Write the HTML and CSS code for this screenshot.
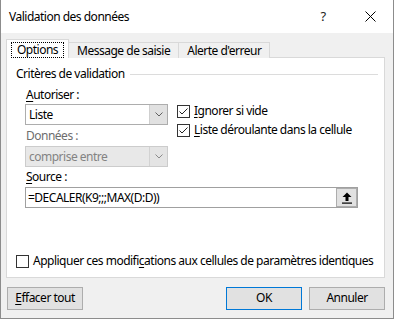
FILE: index.html
```html
<!DOCTYPE html>
<html lang="fr">
<head>
<meta charset="utf-8">
<title>Validation des données</title>
<link rel="stylesheet" href="styles.css">
</head>
<body>
<div class="window">
  <div class="titlebar">
    <span class="title">Validation des données</span>
    <span class="tb-help">?</span>
    <span class="tb-close"><svg width="11" height="11" viewBox="0 0 11 11"><path d="M0.5 0.5 L10.5 10.5 M10.5 0.5 L0.5 10.5" stroke="#000" stroke-width="1" fill="none"/></svg></span>
  </div>
  <div class="client">
    <div class="tabs">
      <div class="tab active"><span class="focus">Options</span></div>
      <div class="tab">Message de saisie</div>
      <div class="tab">Alerte d'erreur</div>
    </div>
    <div class="panel">
      <div class="group-title"><span>Critères de validation</span><span class="rule"></span></div>
      <div class="group-body">
        <div class="col-left">
          <div class="label"><u>A</u>utoriser :</div>
          <div class="select">
            <span class="value">Liste</span>
            <span class="drop"><svg width="8" height="5" viewBox="0 0 8 5"><path d="M0.5 0.5 L4 4 L7.5 0.5" stroke="#606060" fill="none"/></svg></span>
          </div>
          <div class="label disabled gap3">Données :</div>
          <div class="select disabled">
            <span class="value">comprise entre</span>
            <span class="drop"><svg width="8" height="5" viewBox="0 0 8 5"><path d="M0.5 0.5 L4 4 L7.5 0.5" stroke="#8a8a8a" fill="none"/></svg></span>
          </div>
        </div>
        <div class="col-right">
          <div class="check">
            <span class="box"><svg width="11" height="11" viewBox="0 0 11 11"><path d="M1.5 5.5 L4 8 L9.5 2.5" stroke="#222" stroke-width="1" fill="none"/></svg></span>
            <span><u>I</u>gnorer si vide</span>
          </div>
          <div class="check second">
            <span class="box"><svg width="11" height="11" viewBox="0 0 11 11"><path d="M1.5 5.5 L4 8 L9.5 2.5" stroke="#222" stroke-width="1" fill="none"/></svg></span>
            <span><u>L</u>iste déroulante dans la cellule</span>
          </div>
        </div>
      </div>
      <div class="source-block">
        <div class="label"><u>S</u>ource :</div>
        <div class="source">
          <span class="value">=DECALER(K9;;;MAX(D:D))</span>
          <span class="pick"><svg width="10" height="12" viewBox="0 0 10 12"><path d="M5 0.5 L0.5 5 L3.5 5 L3.5 9 L6.5 9 L6.5 5 L9.5 5 Z" fill="#000"/><rect x="0" y="10.5" width="10" height="1.2" fill="#000"/></svg></span>
        </div>
      </div>
      <div class="check apply">
        <span class="box"></span>
        <span class="nowrap">Appliquer ces modifi<u>c</u>ations aux cellules de paramètres identiques</span>
      </div>
    </div>
    <div class="buttons">
      <div class="btn"><u>E</u>ffacer tout</div>
      <div class="spacer"></div>
      <div class="btn default">OK</div>
      <div class="btn">Annuler</div>
    </div>
  </div>
</div>
</body>
</html>
```

FILE: styles.css
```css
html, body {
  margin: 0;
  padding: 0;
  background: #ffffff;
}

body {
  font-family: "Noto Sans", "Liberation Sans", sans-serif;
  font-size: 12px;
  letter-spacing: -0.5px;
  color: #000;
}

u {
  text-decoration: underline;
  text-underline-offset: 2px;
}

.nowrap {
  white-space: nowrap;
}

.window {
  width: 394px;
  height: 319px;
  box-sizing: border-box;
  border: 1px solid #8c8c8c;
  border-top: none;
  background: #f0f0f0;
  display: flex;
  flex-direction: column;
}

.titlebar {
  height: 33px;
  flex: none;
  background: #ffffff;
  display: flex;
  align-items: center;
  padding-left: 8px;
  padding-bottom: 1px;
  box-sizing: border-box;
}

.title {
  flex: 1;
}

.tb-help {
  width: 10px;
  text-align: center;
  margin-right: 37px;
  font-size: 13px;
  color: #222;
}

.tb-close {
  width: 11px;
  height: 11px;
  margin-right: 17px;
  display: flex;
}

.client {
  flex: 1;
  padding: 7px 8px 0 5px;
  display: flex;
  flex-direction: column;
}

.tabs {
  display: flex;
  align-items: flex-end;
  height: 18px;
  position: relative;
  z-index: 1;
  margin-bottom: -1px;
}

.tab {
  height: 16px;
  line-height: 15px;
  padding: 0 8px;
  box-sizing: border-box;
  border: 1px solid #d9d9d9;
  border-bottom: none;
  margin-left: -1px;
  background: #f0f0f0;
}

.tab.active {
  margin-left: 0;
  height: 19px;
  padding: 2px 4px 0 4px;
  background: #ffffff;
  line-height: 13px;
}

.focus {
  display: inline-block;
  border: 1px dotted #000;
  padding: 0 5px 1px 5px;
  line-height: 13px;
}

.panel {
  height: 221px;
  box-sizing: border-box;
  background: #ffffff;
  border: 1px solid #d9d9d9;
  padding: 8px 6px 0 9px;
  display: flex;
  flex-direction: column;
}

.group-title {
  display: flex;
  align-items: center;
  height: 16px;
  line-height: 16px;
}

.rule {
  flex: 1;
  height: 1px;
  background: #dcdcdc;
  margin-left: 5px;
}

.group-body {
  display: flex;
  padding-left: 9px;
  margin-top: 5px;
}

.col-left {
  width: 143px;
  display: flex;
  flex-direction: column;
}

.label {
  height: 16px;
  line-height: 16px;
  padding-left: 1px;
}

.label.disabled {
  color: #6d6d6d;
}

.gap3 {
  margin-top: 3px;
}

.select {
  margin-top: 1px;
  height: 21px;
  box-sizing: border-box;
  border: 1px solid #adadad;
  background: #ffffff;
  display: flex;
}

.label + .select.disabled {
  margin-top: 2px;
}

.select .value {
  flex: 1;
  line-height: 19px;
  padding-left: 3px;
}

.select .drop {
  width: 17px;
  background: #e1e1e1;
  border-left: 1px solid #cfcfcf;
  display: flex;
  align-items: center;
  justify-content: center;
}

.select.disabled {
  background: #e8e8e8;
  border-color: #cccccc;
  color: #838383;
}

.select.disabled .drop {
  background: #e4e4e4;
  border-left-color: #d2d2d2;
}

.col-right {
  margin-left: 9px;
  padding-top: 16px;
  display: flex;
  flex-direction: column;
}

.check {
  display: flex;
  align-items: center;
  height: 16px;
  line-height: 16px;
}

.check.second {
  margin-top: 3px;
}

.box {
  width: 13px;
  height: 13px;
  box-sizing: border-box;
  border: 1px solid #333333;
  background: #ffffff;
  margin-right: 4px;
  display: flex;
  align-items: center;
  justify-content: center;
  flex: none;
}

.source-block {
  padding-left: 9px;
  margin-top: 2px;
  display: flex;
  flex-direction: column;
}

.source {
  margin-top: 2px;
  width: 333px;
  height: 21px;
  box-sizing: border-box;
  border: 1px solid #a0a0a0;
  background: #ffffff;
  display: flex;
}

.source .value {
  flex: 1;
  line-height: 19px;
  padding-left: 2px;
}

.pick {
  width: 21px;
  background: #e1e1e1;
  border: 1px solid #adadad;
  box-sizing: border-box;
  display: flex;
  align-items: center;
  justify-content: center;
}

.check.apply {
  margin-top: 45px;
}

.buttons {
  display: flex;
  margin-top: 9px;
  padding-left: 1px;
  gap: 7px;
}

.spacer {
  flex: 1;
}

.btn {
  width: 76px;
  height: 23px;
  box-sizing: border-box;
  border: 1px solid #adadad;
  background: #e1e1e1;
  text-align: center;
  line-height: 20px;
}

.btn.default {
  border-color: #0078d7;
}
```
